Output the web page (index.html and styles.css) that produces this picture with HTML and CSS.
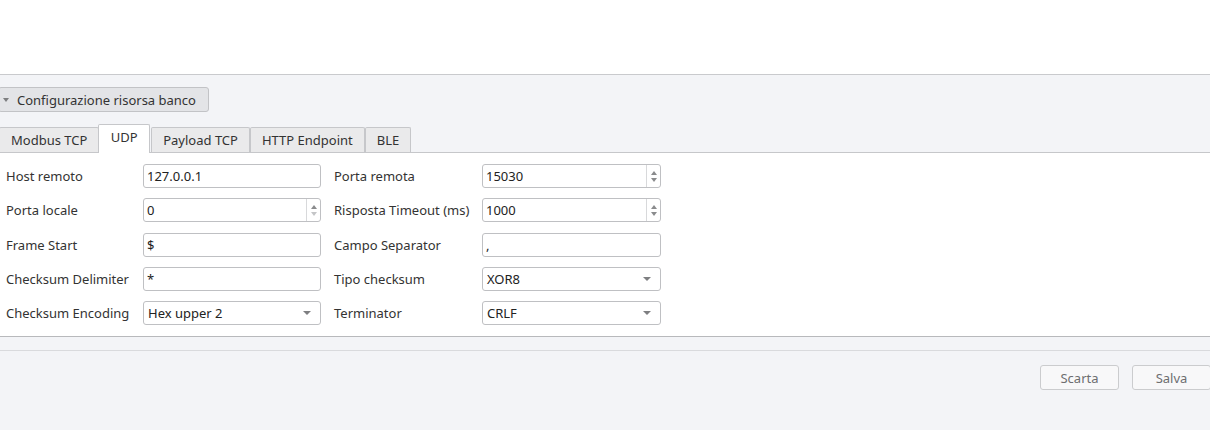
FILE: index.html
```html
<!DOCTYPE html>
<html lang="it">
<head>
    <meta charset="UTF-8">
    <meta name="viewport" content="width=device-width, initial-scale=1.0">
    <title>Configurazione risorsa banco</title>
    <link rel="stylesheet" href="styles.css">
</head>
<body>

    <div class="top-area"></div>

    <div class="config-area">
        <button type="button" class="toggle-btn"><span class="caret"></span>Configurazione risorsa banco</button>

        <div class="tabs">
            <div class="tab">Modbus TCP</div>
            <div class="tab active">UDP</div>
            <div class="tab">Payload TCP</div>
            <div class="tab">HTTP Endpoint</div>
            <div class="tab">BLE</div>
        </div>

        <div class="tab-panel">
            <div class="form-grid">
                <label class="lbl">Host remoto</label>
                <div class="field"><input type="text" value="127.0.0.1"></div>
                <label class="lbl lbl-right">Porta remota</label>
                <div class="field"><input type="text" value="15030"><span class="spin"><i class="up"></i><i class="down"></i></span></div>

                <label class="lbl">Porta locale</label>
                <div class="field"><input type="text" value="0"><span class="spin"><i class="up"></i><i class="down off"></i></span></div>
                <label class="lbl lbl-right">Risposta Timeout (ms)</label>
                <div class="field"><input type="text" value="1000"><span class="spin"><i class="up"></i><i class="down"></i></span></div>

                <label class="lbl">Frame Start</label>
                <div class="field"><input type="text" value="$"></div>
                <label class="lbl lbl-right">Campo Separator</label>
                <div class="field"><input type="text" value=","></div>

                <label class="lbl">Checksum Delimiter</label>
                <div class="field"><input type="text" value="*"></div>
                <label class="lbl lbl-right">Tipo checksum</label>
                <div class="field combo"><span class="combo-value">XOR8</span><span class="combo-arrow"></span></div>

                <label class="lbl">Checksum Encoding</label>
                <div class="field combo"><span class="combo-value">Hex upper 2</span><span class="combo-arrow"></span></div>
                <label class="lbl lbl-right">Terminator</label>
                <div class="field combo"><span class="combo-value">CRLF</span><span class="combo-arrow"></span></div>
            </div>
        </div>

        <div class="footer-strip"></div>

        <div class="actions">
            <button type="button" class="btn">Scarta</button>
            <button type="button" class="btn">Salva</button>
        </div>
    </div>

</body>
</html>
```

FILE: styles.css
```css
body {
    font-family: "Noto Sans", "Open Sans", sans-serif;
    font-size: 13px;
    color: #333;
    background-color: #f3f4f7;
    margin: 0;
    padding: 0;
    overflow: hidden;
}

.top-area {
    height: 74px;
    background-color: #fff;
    border-bottom: 1px solid #c9cacd;
}

.config-area {
    padding-top: 12px;
    margin-left: -2px;
    margin-right: -1px;
}

.toggle-btn {
    display: flex;
    align-items: center;
    height: 25px;
    padding: 0 12px 0 4px;
    font-family: inherit;
    font-size: 13px;
    color: #333;
    background-color: #e3e4e7;
    border: 1px solid #c2c3c6;
    border-radius: 3px;
    cursor: pointer;
}

.caret {
    width: 0;
    height: 0;
    border-left: 3.5px solid transparent;
    border-right: 3.5px solid transparent;
    border-top: 4px solid #7d7e80;
    margin-right: 8px;
}

.tabs {
    display: flex;
    align-items: flex-end;
    height: 28px;
    margin-top: 13px;
    border-bottom: 1px solid #c6c7ca;
    box-sizing: border-box;
    padding-left: 1px;
}

.tab {
    height: 25px;
    line-height: 25px;
    padding: 0 11px;
    background-color: #eaeaeb;
    border: 1px solid #c6c7ca;
    border-bottom: none;
    border-radius: 2px 2px 0 0;
    color: #333;
    box-sizing: border-box;
}

.tab.active {
    height: 29px;
    line-height: 24px;
    margin-bottom: -1px;
    margin-left: -1px;
    margin-right: 1px;
    background-color: #fff;
    padding: 0 11.5px;
}

.tab-panel {
    background-color: #fff;
    border-bottom: 1px solid #b8b9bc;
    padding: 11px 0 11px 8px;
}

.form-grid {
    display: grid;
    grid-template-columns: 137px 178px 161px 179px;
    grid-auto-rows: 24px;
    row-gap: 10.25px;
    align-items: center;
}

.lbl {
    white-space: nowrap;
}

.lbl-right {
    padding-left: 13px;
}

.field {
    display: flex;
    align-items: center;
    height: 24px;
    border: 1px solid #bfc0c3;
    border-radius: 3px;
    background-color: #fff;
    box-sizing: border-box;
}

.field input {
    flex: 1;
    min-width: 0;
    border: none;
    outline: none;
    padding: 0 0 0 3px;
    font-family: inherit;
    font-size: 13px;
    color: #222;
    background: transparent;
}

.spin {
    width: 13px;
    height: 100%;
    border-left: 1px solid #d8d9db;
    display: flex;
    flex-direction: column;
    align-items: center;
    justify-content: center;
    gap: 3px;
}

.spin i {
    width: 0;
    height: 0;
    border-left: 3.5px solid transparent;
    border-right: 3.5px solid transparent;
}

.spin .up {
    border-bottom: 4px solid #8a8b8d;
}

.spin .down {
    border-top: 4px solid #8a8b8d;
}

.spin .down.off {
    border-top-color: #c4c5c7;
}

.combo {
    justify-content: space-between;
    padding: 0 9px 0 4px;
}

.combo-value {
    color: #222;
}

.combo-arrow {
    width: 0;
    height: 0;
    border-left: 4px solid transparent;
    border-right: 4px solid transparent;
    border-top: 4px solid #7e7f81;
}

.footer-strip {
    height: 13px;
    border-bottom: 1px solid #d9dadd;
}

.actions {
    display: flex;
    justify-content: flex-end;
    gap: 13px;
    padding-top: 14px;
}

.btn {
    width: 79px;
    height: 25px;
    font-family: inherit;
    font-size: 13px;
    color: #6d6e70;
    background-color: #f8f8f9;
    border: 1px solid #cbccce;
    border-radius: 3px;
    cursor: pointer;
}
```
